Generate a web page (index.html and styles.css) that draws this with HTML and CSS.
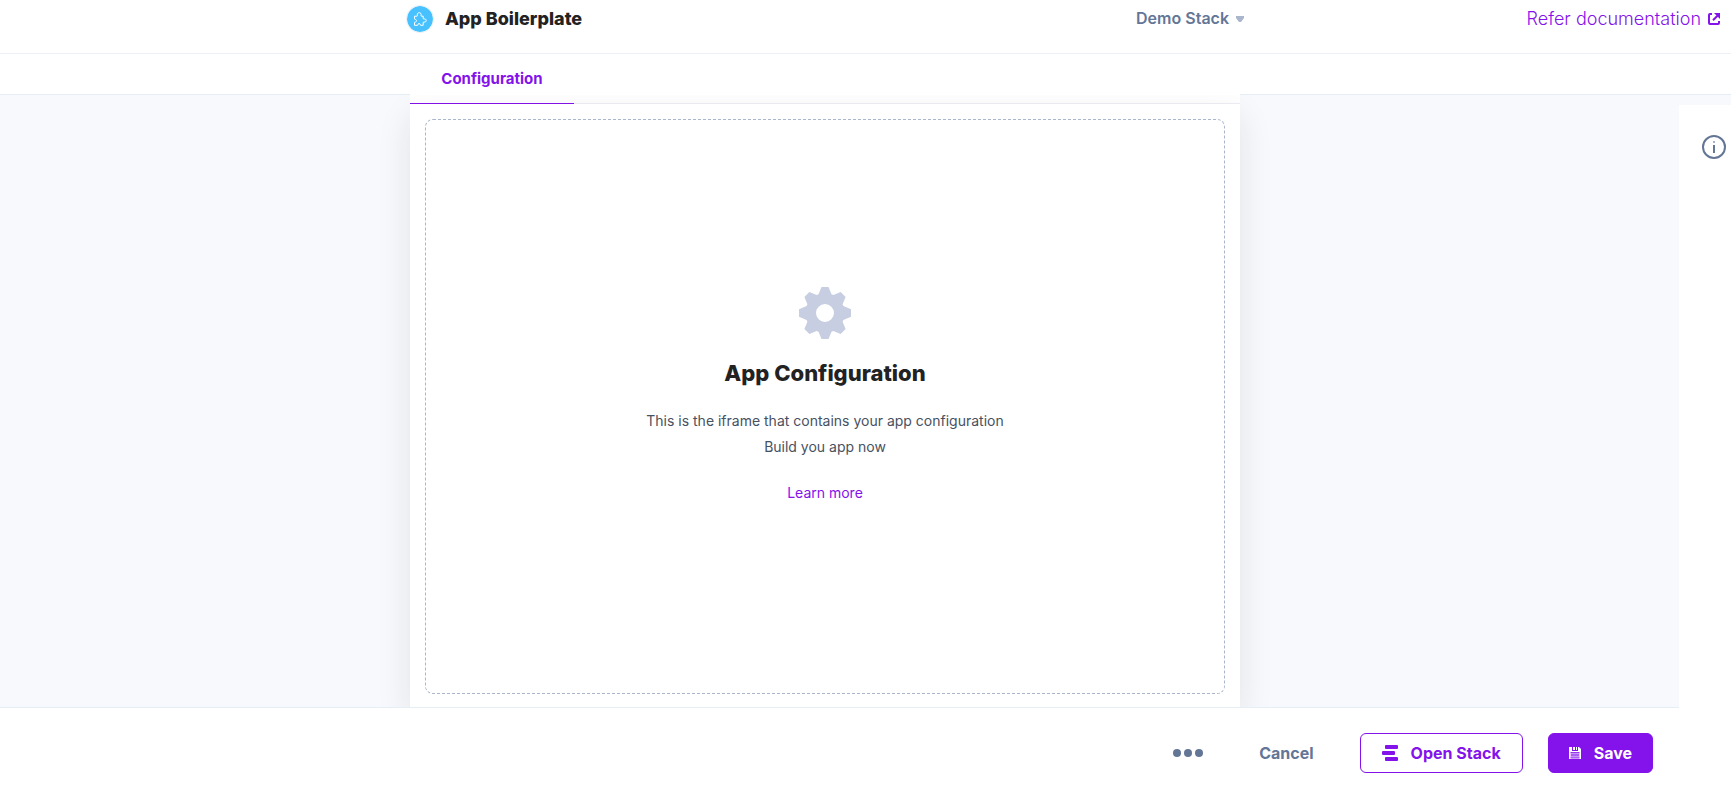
FILE: index.html
```html
<!DOCTYPE html>
<html lang="en">
<head>
<meta charset="utf-8">
<title>App Boilerplate</title>
<link rel="stylesheet" href="styles.css">
</head>
<body>
<div class="app">
  <header class="header">
    <div class="brand">
      <svg class="brand-icon" viewBox="0 0 26 26" aria-hidden="true">
        <circle cx="13" cy="13" r="13" fill="#47c1ff"/>
        <path d="M8 9.200h2.400c.5 0 .6-.4.5-.8-.5-1.600.4-2.700 1.800-2.700s2.300 1.100 1.800 2.700c-.1.400 0 .8.500.8h1.700v2.200c0 .5.3.7.8.6 1.300-.3 2.200.4 2.200 1.500s-.9 1.900-2.200 1.500c-.5-.1-.8.1-.8.600v2.700h-2.500c-.3 0-.4-.2-.4-.500 0-.8-.5-1.300-1.200-1.300s-1.200.5-1.200 1.300c0 .3-.1.500-.4.500H8v-2.700c0-.4.200-.5.500-.5.900 0 1.500-.6 1.500-1.400s-.6-1.400-1.500-1.400c-.3 0-.5-.1-.5-.5z" transform="translate(-.5 1)" fill="none" stroke="#fff" stroke-width="1"/>
      </svg>
      <h1 class="brand-name">App Boilerplate</h1>
    </div>
    <button class="stack-picker" type="button">Demo Stack
      <svg class="caret" viewBox="0 0 8 6" aria-hidden="true"><path d="M0 0h8v2L5 6H3L0 2z" fill="#a9b6cb"/></svg>
    </button>
    <a class="docs-link" href="#docs">Refer documentation
      <svg class="docs-icon" viewBox="0 0 12 12" aria-hidden="true"><path d="M4 1H2Q1 1 1 2v8q0 1 1 1h8q1 0 1-1V8M5 7.200l4.500-4.500" fill="none" stroke="#8412ea" stroke-width="2"/><path d="M6 0h6v6z" fill="#8412ea"/></svg>
    </a>
  </header>
  <main class="main">
    <section class="card">
      <nav class="tabs"><button class="tab" type="button">Configuration</button></nav>
      <div class="panel">
        <div class="frame">
          <svg class="gear" viewBox="0 0 52 52" aria-hidden="true">
            <path fill="#c7cee2" fill-rule="evenodd" d="M22.500 0h7l3 7.200 1.900.8 7.200-3 5 5-3 7.200.8 1.900 7.600 3.100v7.600l-7.600 3.100-.8 1.900 3 7.200-5 5-7.200-3-1.900.8-3 7.200h-7l-3-7.200-1.900-.8-7.200 3-5-5 3-7.200-.8-1.900L0 29.800v-7.600l7.600-3.100.8-1.900-3-7.200 5-5 7.200 3 1.900-.8zM26 17a9 9 0 1 0 0 18 9 9 0 0 0 0-18z"/>
          </svg>
          <h2 class="title">App Configuration</h2>
          <p class="text">This is the iframe that contains your app configuration<br>Build you app now</p>
          <a class="learn" href="#learn">Learn more</a>
        </div>
      </div>
    </section>
  </main>
  <aside class="sidebar">
    <button class="info" type="button" aria-label="Information">
      <svg class="info-icon" viewBox="0 0 24 24" aria-hidden="true"><circle cx="12" cy="12" r="11" fill="none" stroke="#647696" stroke-width="2"/><path d="M12 10V18" stroke="#647696" stroke-width="2"/><path d="M12 6v2" stroke="#a9b4c8" stroke-width="2"/></svg>
    </button>
  </aside>
  <footer class="footer">
    <button class="more" type="button" aria-label="More actions">
      <svg class="dots" viewBox="0 0 30 8" aria-hidden="true"><g fill="#647696"><circle cx="4" cy="4" r="4"/><circle cx="15" cy="4" r="4"/><circle cx="26" cy="4" r="4"/></g></svg>
    </button>
    <button class="cancel" type="button">Cancel</button>
    <button class="button outline" type="button">
      <svg class="stack-icon" viewBox="0 0 16 16" aria-hidden="true"><g fill="#8412ea"><rect x="3" width="13" height="4" rx="1"/><rect y="6" width="13" height="4" rx="1"/><rect x="3" y="12" width="13" height="4" rx="1"/></g></svg>
      Open Stack
    </button>
    <button class="button solid" type="button">
      <svg class="save-icon" viewBox="0 0 12 12" aria-hidden="true"><path d="M0 0h3v4h6V0h1l2 2v10H0z" fill="#fff"/><path d="M4 0h2v3H4zM7 0h1v3H7z" fill="#fff"/><path d="M1.500 5.500h9v5.500h-9z" fill="#c795f7"/><path d="M1.500 5.500h9M2 8h8M1.500 11h9" stroke="#8412ea" stroke-width=".8"/></svg>
      Save
    </button>
  </footer>
</div>
</body>
</html>
```
FILE: styles.css
```css
* { box-sizing: border-box; }

body {
  margin: 0;
  font-family: Inter, "Liberation Sans", sans-serif;
  color: #222;
  background: #fff;
}

button {
  padding: 0;
  border: 0;
  background: none;
  font: inherit;
  cursor: pointer;
}

a { text-decoration: none; color: #8412ea; }

svg { display: block; flex: none; }

.app {
  display: grid;
  grid-template-columns: minmax(0, 1fr) 52px;
  grid-template-rows: auto minmax(0, 1fr) auto;
  min-height: 100vh;
}

.header {
  grid-column: 1 / -1;
  display: grid;
  grid-template-columns: minmax(0, 1fr) auto minmax(0, 476px);
  align-items: start;
  height: 54px;
  padding: 5px 11px 0 407px;
  border-bottom: 1px solid #edf1f7;
  line-height: 27px;
}

.brand { display: flex; align-items: center; gap: 12px; }
.brand-icon { width: 26px; height: 26px; border-radius: 50%; box-shadow: 0 0 0 1px #edf1f7; }
.brand-name { margin: 0; font-size: 18px; font-weight: 800; }

.stack-picker {
  display: flex;
  align-items: center;
  gap: 7px;
  color: #647696;
  font-size: 16px;
  font-weight: 600;
  line-height: 27px;
}
.caret { width: 8px; height: 6px; }

.docs-link {
  display: flex;
  align-items: center;
  justify-content: flex-end;
  gap: 7px;
  font-size: 18px;
  font-weight: 350;
}
.docs-icon { width: 12px; height: 12px; }

.main {
  grid-column: 1 / -1;
  grid-row: 2;
  display: flex;
  padding: 0 491px 0 410px;
  background: linear-gradient(#fff 40px, #e6eef5 40px 41px, #f7f9fc 41px);
}

.card {
  flex: 1;
  display: flex;
  flex-direction: column;
  min-width: 0;
}

.tabs {
  height: 50px;
  background: #fff;
  border-bottom: 1px solid #eeeef4;
}
.tab {
  width: 164px;
  height: 50px;
  border-bottom: 1px solid #8412ea;
  color: #8412ea;
  font-size: 15px;
  font-weight: 700;
}

.panel {
  flex: 1;
  display: flex;
  padding: 15px 15px 13px;
  background: #fff;
  box-shadow: 0 12px 32px rgba(34, 34, 34, 0.1);
  clip-path: inset(-9px -40px 0 -40px);
}

.frame {
  flex: 1;
  display: flex;
  flex-direction: column;
  align-items: center;
  justify-content: center;
  padding-bottom: 20px;
  border: 1px dashed #a9b6cb;
  border-radius: 8px;
}

.gear { width: 52px; height: 52px; }
.title { margin: 16px 0 0; font-size: 22px; font-weight: 800; line-height: 36px; }
.text { margin: 17px 0 0; color: #475161; font-size: 14px; line-height: 26px; text-align: center; }
.learn { margin-top: 20px; font-size: 14px; line-height: 26px; }

.sidebar {
  grid-column: 2;
  grid-row: 2 / 4;
  z-index: 1;
  margin-top: 51px;
  padding: 30px 0 0 23px;
  background: #fff;
}
.info-icon { width: 24px; height: 24px; }

.footer {
  grid-column: 1;
  grid-row: 3;
  display: flex;
  align-items: center;
  justify-content: flex-end;
  height: 78px;
  padding: 12px 26px 0 24px;
  border-top: 1px solid #e6eef5;
  background: #fff;
  color: #647696;
  font-size: 16px;
  font-weight: 700;
}
.dots { width: 30px; height: 8px; }
.cancel { margin: 0 46px 0 56px; color: #647696; }

.button {
  display: flex;
  align-items: center;
  gap: 13px;
  height: 40px;
  padding: 0 20px;
  border: 1px solid #8412ea;
  border-radius: 6px;
}
.outline { padding: 0 21px; color: #8412ea; }
.solid { margin-left: 25px; color: #fff; background: #8412ea; }
.stack-icon { width: 16px; height: 16px; }
.save-icon { width: 12px; height: 12px; }
```
